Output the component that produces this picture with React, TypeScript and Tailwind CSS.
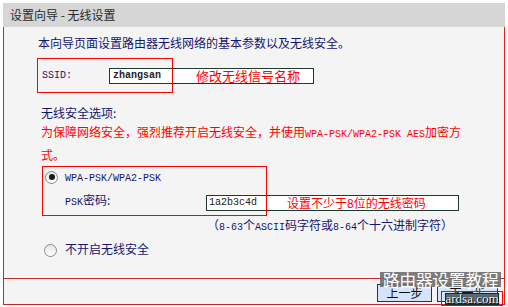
import React from "react";

const cjk = "font-['Noto_Sans_CJK_SC',sans-serif]";
const mono = "font-mono";

function Radio({ checked }: { checked: boolean }) {
  return (
    <div className="w-[13px] h-[13px] rounded-full border border-[#8a8a8a] bg-gradient-to-b from-[#e6e6e6] to-[#ffffff] flex items-center justify-center shrink-0">
      {checked && <div className="w-[6px] h-[6px] rounded-full bg-[#1a1a1a]" />}
    </div>
  );
}

export default function App() {
  return (
    <div className={`relative w-[508px] h-[307px] bg-white pt-[3px] pl-[3px] overflow-hidden ${cjk}`}>
      {/* header */}
      <div className="w-[502px] h-[24px] bg-[#d6d6d6] flex items-center pl-[7px] text-[12px] leading-[16px] text-[#2a2a2a]">
        设置向导&nbsp;-&nbsp;无线设置
      </div>
      <div className="w-[502px] border-l border-l-[#c42a2a] border-r border-r-[#e41c1c] bg-[#f4f4f4]">
        {/* body */}
        <div className="h-[251px] flex flex-col text-[12px] leading-[16px] text-[#15156e]">
          <div className="mt-[8px] ml-[34px]">本向导页面设置路由器无线网络的基本参数以及无线安全。</div>

          {/* SSID */}
          <div className="relative mt-[7px] ml-[33px] h-[35px] flex items-center pl-[5px]">
            <div className={`w-[67px] ${mono} text-[10px] text-[#15156e]`}>SSID:</div>
            <div className="w-[205px] h-[16px] border border-[#1d3a30] bg-white flex items-center">
              <span className={`ml-[3px] w-[83px] ${mono} text-[10px] font-bold text-[#222]`}>zhangsan</span>
              <span className="text-[13px] leading-[16px] text-[#ff0000]">修改无线信号名称</span>
            </div>
            <div className="absolute left-0 top-0 w-[136px] h-[35px] border border-[#ff0000] pointer-events-none" />
          </div>

          <div className="mt-[12px] ml-[37px]">无线安全选项:</div>
          <div className="mt-[1px] ml-[37px] w-[432px] leading-[20px] text-[#ff0000]">
            为保障网络安全，强烈推荐开启无线安全，并使用<span className={`${mono} text-[10px]`}>WPA-PSK/WPA2-PSK AES</span>加密方式。
          </div>

          {/* WPA */}
          <div className="relative mt-[1px] ml-[38px] flex flex-col">
            <div className="h-[22px] flex items-center pl-[3px]">
              <Radio checked />
              <span className={`ml-[7px] mt-[3px] ${mono} text-[10px] text-[#15156e]`}>WPA-PSK/WPA2-PSK</span>
            </div>
            <div className="mt-[7px] h-[16px] flex items-center pl-[23px]">
              <div className="w-[141px] text-[#15156e] -mt-[3px]">
                <span className={`${mono} text-[10px]`}>PSK</span>密码:
              </div>
              <div className="w-[253px] h-[16px] border border-[#1d3a30] bg-white flex items-center">
                <span className={`ml-[2px] w-[78px] ${mono} text-[10px] text-[#222]`}>1a2b3c4d</span>
                <span className="text-[12px] leading-[16px] text-[#ff0000]">设置不少于8位的无线密码</span>
              </div>
            </div>
            <div className="mt-[6px] pl-[165px] text-[#15156e]">
              （<span className={`${mono} text-[10px]`}>8-63</span>个<span className={`${mono} text-[10px]`}>ASCII</span>码字符或<span className={`${mono} text-[10px]`}>8-64</span>个十六进制字符）
            </div>
            <div className="absolute left-0 top-0 w-[225px] h-[50px] border border-[#ff0000] pointer-events-none" />
          </div>

          <div className="mt-[6px] ml-[40px] h-[16px] flex items-center">
            <Radio checked={false} />
            <span className="ml-[8px] -mt-[2px]">不开启无线安全</span>
          </div>
        </div>

        {/* footer */}
        <div className="h-[27px] border-t border-t-[#c42a2a] border-b border-b-[#c42a2a] flex items-center justify-end pr-[6px] gap-[5px]">
          <div className="w-[55px] h-[18px] mt-[2px] border border-[#1e3a3a] bg-[#d6e4fb] text-[12px] leading-[16px] text-[#111] flex items-center justify-center">
            上一步
          </div>
          <div className="w-[61px] h-[18px] mt-[2px] border border-[#1e3a3a] bg-[#d6e4fb] text-[12px] leading-[16px] text-[#111] flex items-center justify-center">
            下一步
          </div>
        </div>
      </div>

      {/* watermark overlays */}
      <div className="absolute left-[380px] top-[272px] w-[121px] h-[15px] bg-[#6e6e6e]/90 flex items-center justify-center text-white text-[17px] leading-[16px] tracking-[-0.5px] whitespace-nowrap overflow-visible">
        路由器设置教程
      </div>
      <div className="absolute left-[441px] top-[291px] w-[62px] h-[15px] border border-[#ff0000] flex items-center justify-center">
        <div className="w-[54px] h-[12px] border border-[#1a2a2a] bg-[#5a6a70] flex items-center justify-center">
          <span className="font-['Liberation_Serif',serif] text-[13px] leading-[12px] text-white [text-shadow:0_0_1px_#000,1px_1px_0_#000]">ardsa.com</span>
        </div>
      </div>
    </div>
  );
}
